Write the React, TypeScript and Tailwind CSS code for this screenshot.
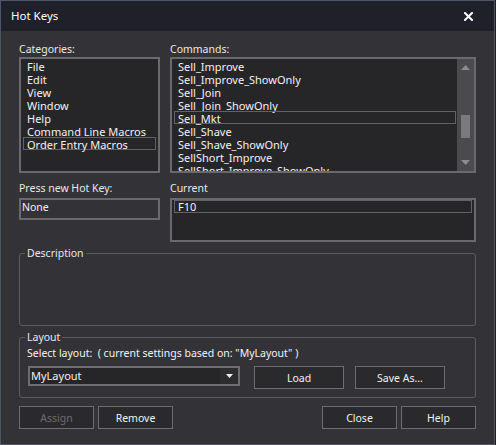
import React from "react";

const categories = ["File", "Edit", "View", "Window", "Help", "Command Line Macros", "Order Entry Macros"];
const commands = [
  "Sell_Improve",
  "Sell_Improve_ShowOnly",
  "Sell_Join",
  "Sell_Join_ShowOnly",
  "Sell_Mkt",
  "Sell_Shave",
  "Sell_Shave_ShowOnly",
  "SellShort_Improve",
  "SellShort_Improve_ShowOnly",
];

function Btn({ children, w, disabled }: { children: React.ReactNode; w: string; disabled?: boolean }) {
  return (
    <div
      className={`${w} h-[23px] flex items-center justify-center border border-[#6e6e70] bg-[#2a2a2c] text-[10.5px] ${
        disabled ? "text-[#6c6c6e]" : "text-[#f2f2f2]"
      }`}
    >
      {children}
    </div>
  );
}

export default function App() {
  return (
    <div className="w-[496px] h-[445px] bg-[#1c1d22] font-['Noto_Sans',sans-serif] text-[10.5px] leading-[16px] text-[#f2f2f2]">
      <div className="w-[495px] h-[445px] border border-[#4f5565] bg-[#333337] flex flex-col">
        {/* title bar */}
        <div className="h-[30px] bg-[#1f2029] flex items-center justify-between pl-[10px] pr-[21px] shrink-0">
          <span className="text-[11.5px] text-white">Hot Keys</span>
          <svg width="9" height="9" viewBox="0 0 9 9">
            <path d="M1 1 L8 8 M8 1 L1 8" stroke="#ffffff" strokeWidth="2" strokeLinecap="square" />
          </svg>
        </div>

        <div className="flex flex-col px-[18px] pt-[11px]">
          {/* top lists */}
          <div className="flex gap-[10px]">
            <div className="flex flex-col w-[141px]">
              <div className="h-[15px] leading-[15px] text-[#e8e8e8]">Categories:</div>
              <div className="h-[116px] border-2 border-[#6a6a6c] bg-[#262628] flex flex-col pt-[1px] text-[11px]">
                {categories.map((c, i) => (
                  <div
                    key={c}
                    className={`h-[13px] leading-[13px] whitespace-nowrap ${
                      i === 6 ? "mx-[2px] border border-[#626264] pl-[3px] leading-[11px] -mt-[1px]" : "pl-[6px]"
                    }`}
                  >
                    {c}
                  </div>
                ))}
              </div>
            </div>
            <div className="flex flex-col w-[306px]">
              <div className="h-[15px] leading-[15px] text-[#e8e8e8]">Commands:</div>
              <div className="h-[116px] border-2 border-[#6a6a6c] bg-[#262628] flex overflow-hidden text-[11px]">
                <div className="flex-1 flex flex-col overflow-hidden pt-[1px]">
                  {commands.map((c, i) => (
                    <div
                      key={c}
                      className={`h-[13px] shrink-0 leading-[13px] whitespace-nowrap ${
                        i === 4 ? "ml-[2px] mr-[1px] border border-[#626264] pl-[3px] leading-[11px] -mt-[1px] mb-[1px]" : "pl-[6px]"
                      }`}
                    >
                      {c}
                    </div>
                  ))}
                </div>
                <div className="w-[17px] bg-[#4b4b4d] flex flex-col items-center justify-between py-[6px] relative">
                  <svg width="9" height="5" viewBox="0 0 9 5">
                    <path d="M0 5 L4.5 0 L9 5 Z" fill="#8c8c8e" />
                  </svg>
                  <svg width="9" height="5" viewBox="0 0 9 5">
                    <path d="M0 0 L4.5 5 L9 0 Z" fill="#8c8c8e" />
                  </svg>
                  <div className="absolute left-[4px] top-[56px] w-[9px] h-[23px] bg-[#7a7a7c]" />
                </div>
              </div>
            </div>
          </div>

          {/* hot key row */}
          <div className="flex gap-[10px] mt-[7px]">
            <div className="flex flex-col w-[141px]">
              <div className="h-[16px] text-[#e8e8e8]">Press new Hot Key:</div>
              <div className="mt-[2px] h-[22px] border-2 border-[#6a6a6c] pl-[1px] leading-[15px]">None</div>
            </div>
            <div className="flex flex-col w-[306px]">
              <div className="h-[16px] text-[#e8e8e8]">Current</div>
              <div className="mt-[2px] h-[44px] border-2 border-[#6a6a6c] bg-[#262628] text-[11px]">
                <div className="mx-[2px] h-[13px] border border-[#626264] pl-[3px] leading-[11px]">F10</div>
              </div>
            </div>
          </div>

          {/* description */}
          <fieldset className="mt-[3px] w-[457px] h-[81px] border border-[#5e5e62] rounded-[3px] px-[5px]">
            <legend className="px-[2px] leading-[16px] text-[#e8e8e8]">Description</legend>
          </fieldset>

          {/* layout */}
          <fieldset className="mt-[3px] w-[457px] h-[69px] border border-[#5e5e62] rounded-[3px] px-[5px]">
            <legend className="px-[2px] leading-[16px] text-[#e8e8e8]">Layout</legend>
            <div className="ml-[2px] h-[16px] whitespace-nowrap">
              Select layout:&nbsp; ( current settings based on: "MyLayout" )
            </div>
            <div className="flex items-start mt-[5px] ml-[3px]">
              <div className="w-[212px] h-[20px] border-2 border-[#6e6e70] bg-[#262628] flex">
                <div className="flex-1 pl-[1px] leading-[15px] text-[11px]">MyLayout</div>
                <div className="w-[18px] bg-[#2d2d2f] flex items-center justify-center">
                  <svg width="7" height="4" viewBox="0 0 7 4">
                    <path d="M0 0 L7 0 L3.5 4 Z" fill="#f0f0f0" />
                  </svg>
                </div>
              </div>
              <div className="ml-[14px]">
                <Btn w="w-[90px]">Load</Btn>
              </div>
              <div className="ml-[11px]">
                <Btn w="w-[90px]">Save As...</Btn>
              </div>
            </div>
          </fieldset>

          {/* bottom buttons */}
          <div className="flex mt-[8px]">
            <Btn w="w-[75px]" disabled>
              Assign
            </Btn>
            <div className="ml-[4px]">
              <Btn w="w-[75px]">Remove</Btn>
            </div>
            <div className="ml-auto flex gap-[4px]">
              <Btn w="w-[75px]">Close</Btn>
              <Btn w="w-[75px]">Help</Btn>
            </div>
          </div>
        </div>
      </div>
    </div>
  );
}
